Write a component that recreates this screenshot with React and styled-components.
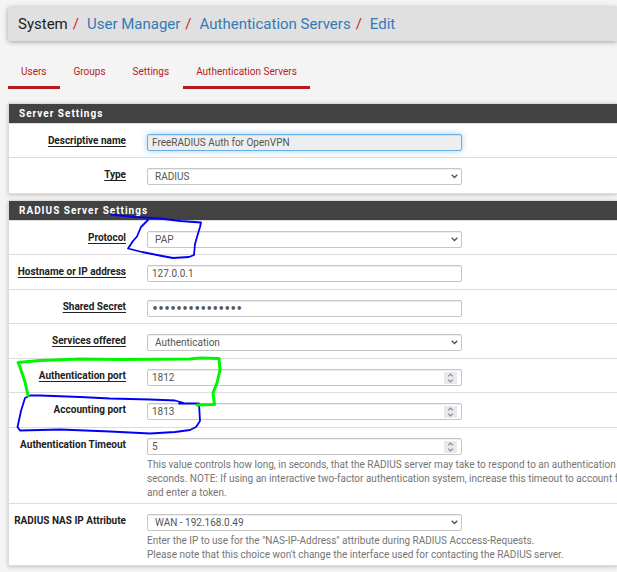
import React from "react";
import styled, { createGlobalStyle, css } from "styled-components";

const GlobalStyle = createGlobalStyle`
  *, *::before, *::after { box-sizing: border-box; }
  body {
    margin: 0;
    background: #f4f4f4;
    color: #212121;
    font: 10px/14px Roboto, "Liberation Sans", sans-serif;
    overflow-x: hidden;
  }
`;

const Page = styled.main`
  position: relative;
  padding: 7px 0 5px 8px;
  overflow: hidden;
`;

const Breadcrumb = styled.nav`
  display: flex;
  align-items: center;
  height: 34px;
  padding: 0 10px;
  background: #e0e0e0;
  border-radius: 2px 0 0 2px;
  box-shadow: 0 1px 5px rgba(0, 0, 0, 0.35);
  font-size: 15px;
  line-height: 20px;
  white-space: nowrap;
`;

const CrumbLink = styled.a`
  color: #337ab7;
  text-decoration: none;
`;

const Slash = styled.span`
  padding: 0 8px 0 5px;
  color: #c62828;
`;

const Tabs = styled.nav`
  display: flex;
  gap: 1px;
  margin-top: 17px;
`;

const Tab = styled.a`
  height: 31px;
  padding: 7px 13px 0;
  border-bottom: 3px solid ${(p) => (p.$active ? "#b71c1c" : "transparent")};
  color: #b71c1c;
  text-decoration: none;
  white-space: nowrap;
`;

const Panel = styled.section`
  margin-top: ${(p) => (p.$first ? 14 : 6)}px;
  background: #fff;
  border: 1px solid #dcdcdc;
  border-right: 0;
  box-shadow: 0 1px 4px rgba(0, 0, 0, 0.2);
`;

const PanelTitle = styled.h2`
  height: 20px;
  margin: 0;
  padding: 0 10px;
  background: #424242;
  border-bottom: 1px solid #dcdcdc;
  color: #fff;
  font-size: 10px;
  font-weight: 700;
  line-height: 19px;
  letter-spacing: 1px;
`;

const Rows = styled.div`
  display: grid;
  grid-auto-rows: minmax(34px, auto) minmax(35px, auto);
`;

const Row = styled.div`
  display: grid;
  grid-template-columns: 117px minmax(0, 1fr);
  column-gap: 21px;
  align-items: start;
  padding-top: 10px;
  border-bottom: 1px solid #dcdcdc;
  &:last-child { border-bottom: 0; }
`;

const Label = styled.label`
  font-weight: 700;
  line-height: 14px;
  text-align: right;
  white-space: nowrap;
  text-decoration: ${(p) => (p.$required ? "underline" : "none")};
  text-underline-offset: 2px;
`;

const Control = styled.div`
  display: flex;
  align-items: center;
  position: relative;
  max-width: 315px;
  height: 17px;
  background: #fff;
  border: 1px solid #c6c6c6;
  border-radius: 2px;
  box-shadow: inset 0 1px 1px rgba(0, 0, 0, 0.075);
  ${(p) => p.$focused && css`
    background: #eee;
    border-color: #66afe9;
    box-shadow: inset 0 1px 1px rgba(0, 0, 0, 0.075), 0 0 6px rgba(102, 175, 233, 0.6);
  `}
`;

const field = css`
  flex: 1;
  width: 100%;
  min-width: 0;
  height: 15px;
  margin: 0;
  border: 0;
  outline: 0;
  background: transparent;
  color: #555;
  font: inherit;
  line-height: 15px;
  appearance: none;
`;

const Input = styled.input`
  ${field}
  padding: 0 4px;
  appearance: textfield;
  &::-webkit-inner-spin-button { appearance: none; margin: 0; }
  &[type="password"] { font: bold 10px/15px "DejaVu Sans Mono", monospace; }
`;

const Select = styled.select`
  ${field}
  padding: 0 16px 0 7px;
`;

const Chevron = styled.svg`
  position: absolute;
  right: 3px;
  width: 7px;
  height: 5px;
  pointer-events: none;
`;

const Spinner = styled.span`
  display: flex;
  align-items: center;
  justify-content: center;
  width: 13px;
  height: 12px;
  margin-right: 4px;
  background: #e8e8ee;
`;

const Help = styled.div`
  padding: 3px 0;
  color: #757575;
  white-space: nowrap;
`;

const HelpLine = styled.div`
  line-height: 14px;
`;

const Annotations = styled.svg`
  position: absolute;
  top: 0;
  left: 0;
  pointer-events: none;
  fill: none;
  stroke-linecap: round;
  stroke-linejoin: round;
`;

function FormRow({ id, label, required, type = "text", value, focused, help }) {
  return (
    <Row>
      <Label htmlFor={id} $required={required}>{label}</Label>
      <div>
        <Control $focused={focused}>
          {type === "select" ? (
            <>
              <Select id={id} defaultValue={value}><option>{value}</option></Select>
              <Chevron viewBox="0 0 7 5" fill="none" stroke="#555" strokeWidth="1.4">
                <path d="M0.7 0.8 3.5 3.6 6.3 0.8" />
              </Chevron>
            </>
          ) : (
            <Input id={id} type={type} defaultValue={value} readOnly={focused} autoComplete="off" />
          )}
          {type === "number" && (
            <Spinner>
              <svg width="7" height="10" viewBox="0 0 7 10" fill="none" stroke="#8a8a92" strokeWidth="1.2">
                <path d="M1.2 3.4 3.5 1.1 5.8 3.4M1.2 6.6 3.5 8.9 5.8 6.6" />
              </svg>
            </Spinner>
          )}
        </Control>
        {help && <Help>{help.map((line) => <HelpLine key={line}>{line}</HelpLine>)}</Help>}
      </div>
    </Row>
  );
}

const serverFields = [
  { id: "name", label: "Descriptive name", required: true, value: "FreeRADIUS Auth for OpenVPN", focused: true },
  { id: "type", label: "Type", required: true, type: "select", value: "RADIUS" },
];

const radiusFields = [
  { id: "protocol", label: "Protocol", required: true, type: "select", value: "PAP" },
  { id: "host", label: "Hostname or IP address", required: true, value: "127.0.0.1" },
  { id: "secret", label: "Shared Secret", required: true, type: "password", value: "radiussecret123" },
  { id: "services", label: "Services offered", required: true, type: "select", value: "Authentication" },
  { id: "auth-port", label: "Authentication port", required: true, type: "number", value: "1812" },
  { id: "acct-port", label: "Accounting port", type: "number", value: "1813" },
  {
    id: "timeout", label: "Authentication Timeout", type: "number", value: "5",
    help: [
      "This value controls how long, in seconds, that the RADIUS server may take to respond to an authentication request.",
      "seconds. NOTE: If using an interactive two-factor authentication system, increase this timeout to account for",
      "and enter a token.",
    ],
  },
  {
    id: "nas-ip", label: "RADIUS NAS IP Attribute", type: "select", value: "WAN - 192.168.0.49",
    help: [
      'Enter the IP to use for the "NAS-IP-Address" attribute during RADIUS Acccess-Requests.',
      "Please note that this choice won't change the interface used for contacting the RADIUS server.",
    ],
  },
];

export default function App() {
  return (
    <>
      <GlobalStyle />
      <Page>
        <Breadcrumb aria-label="Breadcrumb">
          <span>System</span><Slash>/</Slash>
          <CrumbLink href="#users">User Manager</CrumbLink><Slash>/</Slash>
          <CrumbLink href="#servers">Authentication Servers</CrumbLink><Slash>/</Slash>
          <CrumbLink href="#edit">Edit</CrumbLink>
        </Breadcrumb>
        <Tabs>
          <Tab href="#users" $active>Users</Tab>
          <Tab href="#groups">Groups</Tab>
          <Tab href="#settings">Settings</Tab>
          <Tab href="#servers" $active>Authentication Servers</Tab>
        </Tabs>
        <Panel $first>
          <PanelTitle>Server Settings</PanelTitle>
          <Rows>{serverFields.map((f) => <FormRow key={f.id} {...f} />)}</Rows>
        </Panel>
        <Panel>
          <PanelTitle>RADIUS Server Settings</PanelTitle>
          <Rows>{radiusFields.map((f) => <FormRow key={f.id} {...f} />)}</Rows>
        </Panel>
        <Annotations width="230" height="440" viewBox="0 0 230 440" aria-hidden="true">
          <g stroke="#0000f5" strokeWidth="1.8">
            <path d="M111 214.5 135 217 160 218.5 180 221 201 222.5 200 227 197 237 195 244 194 255 189 257 173 258 162 256 142 252 128 248.500 133 241 137 236.500 141 227 146 222 148 220" />
            <path d="M179 403.500H199L200 421 196 427 190 430 175 432 150 433.500 110 431.500 60 429.500 20 430.500 17.500 427 21 411 25 398 30 395.500 40 395.500 80 397 110 398.500 150 399.500 175 400.500 184 403" />
          </g>
          <path stroke="#00f500" strokeWidth="3" d="M28 395.500 25 382 20 367 18 362.500 40 360.500 80 359 120 359.500 190 359 200 358 219 358.500 220 370 217 383 213 393 214.500 404.500 197 405" />
        </Annotations>
      </Page>
    </>
  );
}
